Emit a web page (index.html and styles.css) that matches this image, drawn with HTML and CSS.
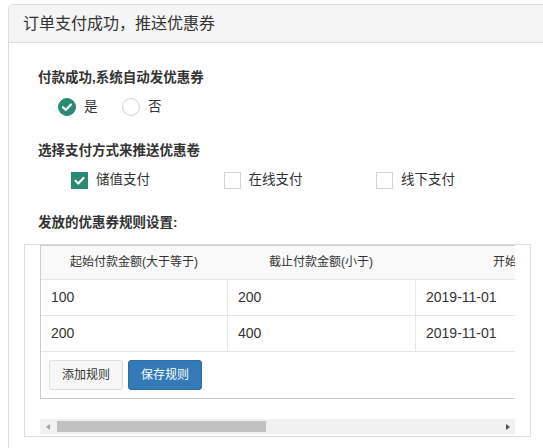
FILE: index.html
```html
<!DOCTYPE html>
<html lang="zh-CN">
<head>
<meta charset="utf-8">
<title>订单支付成功，推送优惠券</title>
<link rel="stylesheet" href="styles.css">
</head>
<body>
<div class="panel">
  <div class="panel-heading">订单支付成功，推送优惠券</div>
  <div class="panel-body">
    <div class="field">
      <div class="field-label">付款成功,系统自动发优惠券</div>
      <div class="options radios">
        <label class="opt opt-radio">
          <span class="radio checked">
            <svg viewBox="0 0 18 18" width="18" height="18"><polyline points="5,9.2 7.8,12 13,6.6" fill="none" stroke="#fff" stroke-width="2.2" stroke-linecap="round" stroke-linejoin="round"/></svg>
          </span>是
        </label>
        <label class="opt opt-radio">
          <span class="radio"></span>否
        </label>
      </div>
    </div>

    <div class="field field-gap">
      <div class="field-label">选择支付方式来推送优惠卷</div>
      <div class="options checks">
        <label class="opt opt-check">
          <span class="checkbox checked">
            <svg viewBox="0 0 17 17" width="17" height="17"><polyline points="4.5,8.8 7.3,11.5 12.5,6" fill="none" stroke="#fff" stroke-width="2.2" stroke-linecap="round" stroke-linejoin="round"/></svg>
          </span>储值支付
        </label>
        <label class="opt opt-check">
          <span class="checkbox"></span>在线支付
        </label>
        <label class="opt opt-check">
          <span class="checkbox"></span>线下支付
        </label>
      </div>
    </div>

    <div class="field field-gap2">
      <div class="field-label">发放的优惠券规则设置:</div>
    </div>

    <div class="rules">
      <div class="rules-scroll">
        <div class="rules-table">
          <table>
            <colgroup>
              <col class="c1"><col class="c2"><col class="c3">
            </colgroup>
            <thead>
              <tr>
                <th>起始付款金额(大于等于)</th>
                <th>截止付款金额(小于)</th>
                <th>开始日期</th>
              </tr>
            </thead>
            <tbody>
              <tr>
                <td>100</td>
                <td>200</td>
                <td>2019-11-01</td>
              </tr>
              <tr>
                <td>200</td>
                <td>400</td>
                <td>2019-11-01</td>
              </tr>
            </tbody>
          </table>
          <div class="btn-row">
            <button class="btn btn-default" type="button">添加规则</button>
            <button class="btn btn-primary" type="button">保存规则</button>
          </div>
        </div>
      </div>
      <div class="scrollbar">
        <span class="sb-btn"><span class="arrow arrow-left"></span></span>
        <span class="sb-track"><span class="sb-thumb"></span></span>
        <span class="sb-btn"><span class="arrow arrow-right"></span></span>
      </div>
    </div>
  </div>
</div>
</body>
</html>
```
FILE: styles.css
```css
html, body {
  margin: 0;
  padding: 0;
  background: #fff;
  overflow: hidden;
}

body {
  font-family: "Liberation Sans", "Noto Sans CJK SC", sans-serif;
  color: #333;
  font-size: 13px;
}

.panel {
  margin: 4px 0 0 8px;
  width: 580px;
  height: 460px;
  border: 1px solid #ddd;
  border-radius: 4px;
  box-sizing: border-box;
}

.panel-heading {
  height: 37px;
  line-height: 37px;
  padding-left: 14px;
  background: #f5f5f5;
  border-bottom: 1px solid #ddd;
  border-radius: 3px 3px 0 0;
  font-size: 16px;
  color: #333;
}

.panel-body {
  padding: 25px 0 0 15px;
}

.field {
  padding-left: 14px;
}

.field-gap {
  margin-top: 25px;
}

.field-gap2 {
  margin-top: 24px;
}

.field-label {
  font-weight: bold;
  font-size: 13.5px;
  line-height: 20px;
  height: 20px;
  color: #333;
}

.options {
  display: flex;
  margin-top: 10px;
  height: 18px;
  align-items: center;
  font-size: 13.5px;
  line-height: 18px;
}

.radios {
  padding-left: 20px;
}

.checks {
  padding-left: 33px;
}

.opt {
  display: flex;
  align-items: center;
}

.opt-radio {
  width: 64px;
}

.opt-check {
  width: 152.5px;
}

.radio {
  width: 18px;
  height: 18px;
  border-radius: 50%;
  border: 1px solid #d4d4d4;
  box-sizing: border-box;
  margin-right: 8px;
  background: #fff;
  display: flex;
}

.radio.checked {
  background: #2a8a73;
  border-color: #2a8a73;
}

.radio.checked svg {
  margin: -1px;
}

.checkbox {
  width: 17px;
  height: 17px;
  border: 1px solid #d4d4d4;
  box-sizing: border-box;
  margin-right: 8px;
  background: #fff;
  display: flex;
}

.checkbox.checked {
  background: #2a8a73;
  border-color: #2a8a73;
}

.checkbox.checked svg {
  margin: -1px;
}

.rules {
  margin-top: 11px;
  width: 507px;
  box-sizing: border-box;
  border: 1px solid #ddd;
  padding: 0 15px 2px 15px;
}

.rules-scroll {
  overflow: hidden;
  width: 475px;
}

.rules-table {
  width: 579px;
  border: 1px solid #ccc;
  border-right: none;
}

table {
  border-collapse: separate;
  border-spacing: 0;
  table-layout: fixed;
  width: 578px;
}

col.c1 { width: 186px; }
col.c2 { width: 188px; }
col.c3 { width: 204px; }

th {
  line-height: 33px;
  padding: 0 10px;
  background: #f9f9f9;
  font-weight: normal;
  text-align: center;
  white-space: nowrap;
  border-bottom: 1px solid #e6e6e6;
  color: #333;
  font-size: 12px;
}

td {
  line-height: 35px;
  padding: 0 10px;
  text-align: left;
  border-bottom: 1px solid #e6e6e6;
  border-left: 1px solid #e6e6e6;
  font-size: 14px;
  color: #333;
}

td:first-child {
  border-left: none;
}

.btn-row {
  display: flex;
  gap: 5px;
  padding: 8px;
}

.btn {
  font-family: "Liberation Sans", "Noto Sans CJK SC", sans-serif;
  font-size: 12px;
  line-height: 18px;
  padding: 5px 12px;
  border: 1px solid #ddd;
  border-radius: 3px;
  cursor: pointer;
  margin: 0;
}

.btn-default {
  background: #f7f7f7;
  color: #333;
}

.btn-primary {
  background: #337ab7;
  border-color: #2e6da4;
  color: #fff;
}

.scrollbar {
  display: flex;
  margin-top: 20px;
  width: 475px;
  height: 15px;
  background: #f1f1f1;
}

.sb-btn {
  width: 15px;
  height: 15px;
  display: flex;
  align-items: center;
  justify-content: center;
  flex: none;
}

.sb-track {
  flex: 1;
}

.sb-thumb {
  display: block;
  margin: 2px 0 0 2px;
  width: 209px;
  height: 11px;
  background: #c1c1c1;
}

.arrow {
  width: 0;
  height: 0;
  border-top: 3.5px solid transparent;
  border-bottom: 3.5px solid transparent;
}

.arrow-left {
  border-right: 4px solid #a3a3a3;
}

.arrow-right {
  border-left: 4px solid #505050;
}
```
